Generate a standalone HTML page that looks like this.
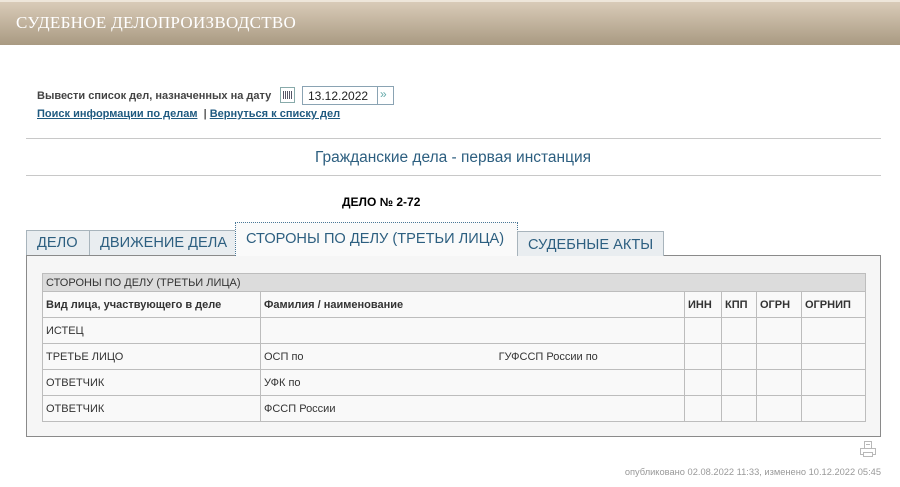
<!DOCTYPE html>
<html><head><meta charset="utf-8"><style>
body{margin:0;width:900px;height:487px;background:#fff;font-family:"Liberation Sans",Arial,sans-serif;position:relative;overflow:hidden}
.hdr{position:absolute;left:0;top:0;width:900px;height:45px;background:linear-gradient(#d9cbb8,#a99a82);border-top:2px solid #eee6da;box-sizing:border-box}
.hdr span{position:absolute;left:16px;top:11px;font-family:"Liberation Serif",serif;font-size:17px;color:#fff;letter-spacing:0.3px}
.t{position:absolute;white-space:nowrap}
a{color:#1f5a80;text-decoration:underline}
.hr{position:absolute;left:26px;width:855px;height:1px;background:#c8c8c8}
.tab{position:absolute;top:230px;height:25px;box-sizing:border-box;border:1px solid #a8b4bc;border-bottom:none;background:#e9edf0;color:#2d5f80;font-size:14.6px;line-height:25px;padding-left:10px}
.panel{position:absolute;left:26px;top:255px;width:855px;height:182px;box-sizing:border-box;border:1px solid #8a8a8a;background:#f6f6f6}
table{position:absolute;left:42px;top:273px;border-collapse:collapse;font-size:11px;color:#333}
td{border:1px solid #bdbdbd;padding:0 3px;background:#f9f9f9;vertical-align:middle}
</style></head><body>
<div class="hdr"><span>СУДЕБНОЕ ДЕЛОПРОИЗВОДСТВО</span></div>
<div class="t" style="left:37px;top:90px;font-size:11px;font-weight:bold;color:#444">Вывести список дел, назначенных на дату</div>
<div style="position:absolute;left:280px;top:87px;width:15px;height:16px;border:1px solid #8aa;box-sizing:border-box;background:#fff"><div style="margin:3px 2px;width:9px;height:8px;background:repeating-linear-gradient(90deg,#556 0 1px,transparent 1px 2px)"></div></div>
<div style="position:absolute;left:302px;top:86px;width:92px;height:19px;border:1px solid #8aa3b3;box-sizing:border-box;background:#fff"><span class="t" style="left:5px;top:2px;font-size:12px;color:#222">13.12.2022</span><div style="position:absolute;left:74px;top:0;width:1px;height:17px;background:#8aa3b3"></div><span class="t" style="left:77px;top:0px;font-size:12px;color:#6aa">»</span></div>
<div class="t" style="left:37px;top:108px;font-size:11px;font-weight:bold;color:#555"><a>Поиск информации по делам</a> &nbsp;| <a>Вернуться к списку дел</a></div>
<div class="hr" style="top:138px"></div>
<div class="t" style="left:0;width:906px;text-align:center;top:149px;font-size:15.5px;color:#2d5f80">Гражданские дела - первая инстанция</div>
<div class="hr" style="top:175px"></div>
<div class="t" style="left:342px;top:195px;font-size:12px;font-weight:bold;color:#000">ДЕЛО № 2-72</div>
<div class="panel"></div>
<div class="tab" style="left:26px;width:64px">ДЕЛО</div>
<div class="tab" style="left:89px;width:147px">ДВИЖЕНИЕ ДЕЛА</div>
<div class="tab" style="left:235px;top:222px;height:34px;width:283px;background:#fafafa;border:1px dotted #4a7898;border-bottom:none;line-height:33px">СТОРОНЫ ПО ДЕЛУ (ТРЕТЬИ ЛИЦА)</div>
<div class="tab" style="left:517px;top:231px;width:147px;line-height:26px">СУДЕБНЫЕ АКТЫ</div>
<table>
<tr style="height:18px"><td colspan="6" style="background:#dcdcdc">СТОРОНЫ ПО ДЕЛУ (ТРЕТЬИ ЛИЦА)</td></tr>
<tr style="height:26px;font-weight:bold"><td style="width:211px">Вид лица, участвующего в деле</td><td style="width:417px">Фамилия / наименование</td><td style="width:30px">ИНН</td><td style="width:28px">КПП</td><td style="width:38px">ОГРН</td><td style="width:57px">ОГРНИП</td></tr>
<tr style="height:26px"><td>ИСТЕЦ</td><td></td><td></td><td></td><td></td><td></td></tr>
<tr style="height:26px"><td>ТРЕТЬЕ ЛИЦО</td><td>ОСП по <span style="margin-left:192px">ГУФССП России по</span></td><td></td><td></td><td></td><td></td></tr>
<tr style="height:26px"><td>ОТВЕТЧИК</td><td>УФК по</td><td></td><td></td><td></td><td></td></tr>
<tr style="height:26px"><td>ОТВЕТЧИК</td><td>ФССП России</td><td></td><td></td><td></td><td></td></tr>
</table>
<svg style="position:absolute;left:859px;top:440px" width="18" height="18" viewBox="0 0 18 18" fill="none" stroke="#b8b8b8"><rect x="5.5" y="1.5" width="7" height="7"/><rect x="1.5" y="8.5" width="15" height="6"/><rect x="4.5" y="12.5" width="9" height="4" fill="#fff"/><line x1="7" y1="4.5" x2="11" y2="4.5"/></svg>
<div class="t" style="right:19px;top:467px;font-size:9.3px;color:#999">опубликовано 02.08.2022 11:33, изменено 10.12.2022 05:45</div>
</body></html>
